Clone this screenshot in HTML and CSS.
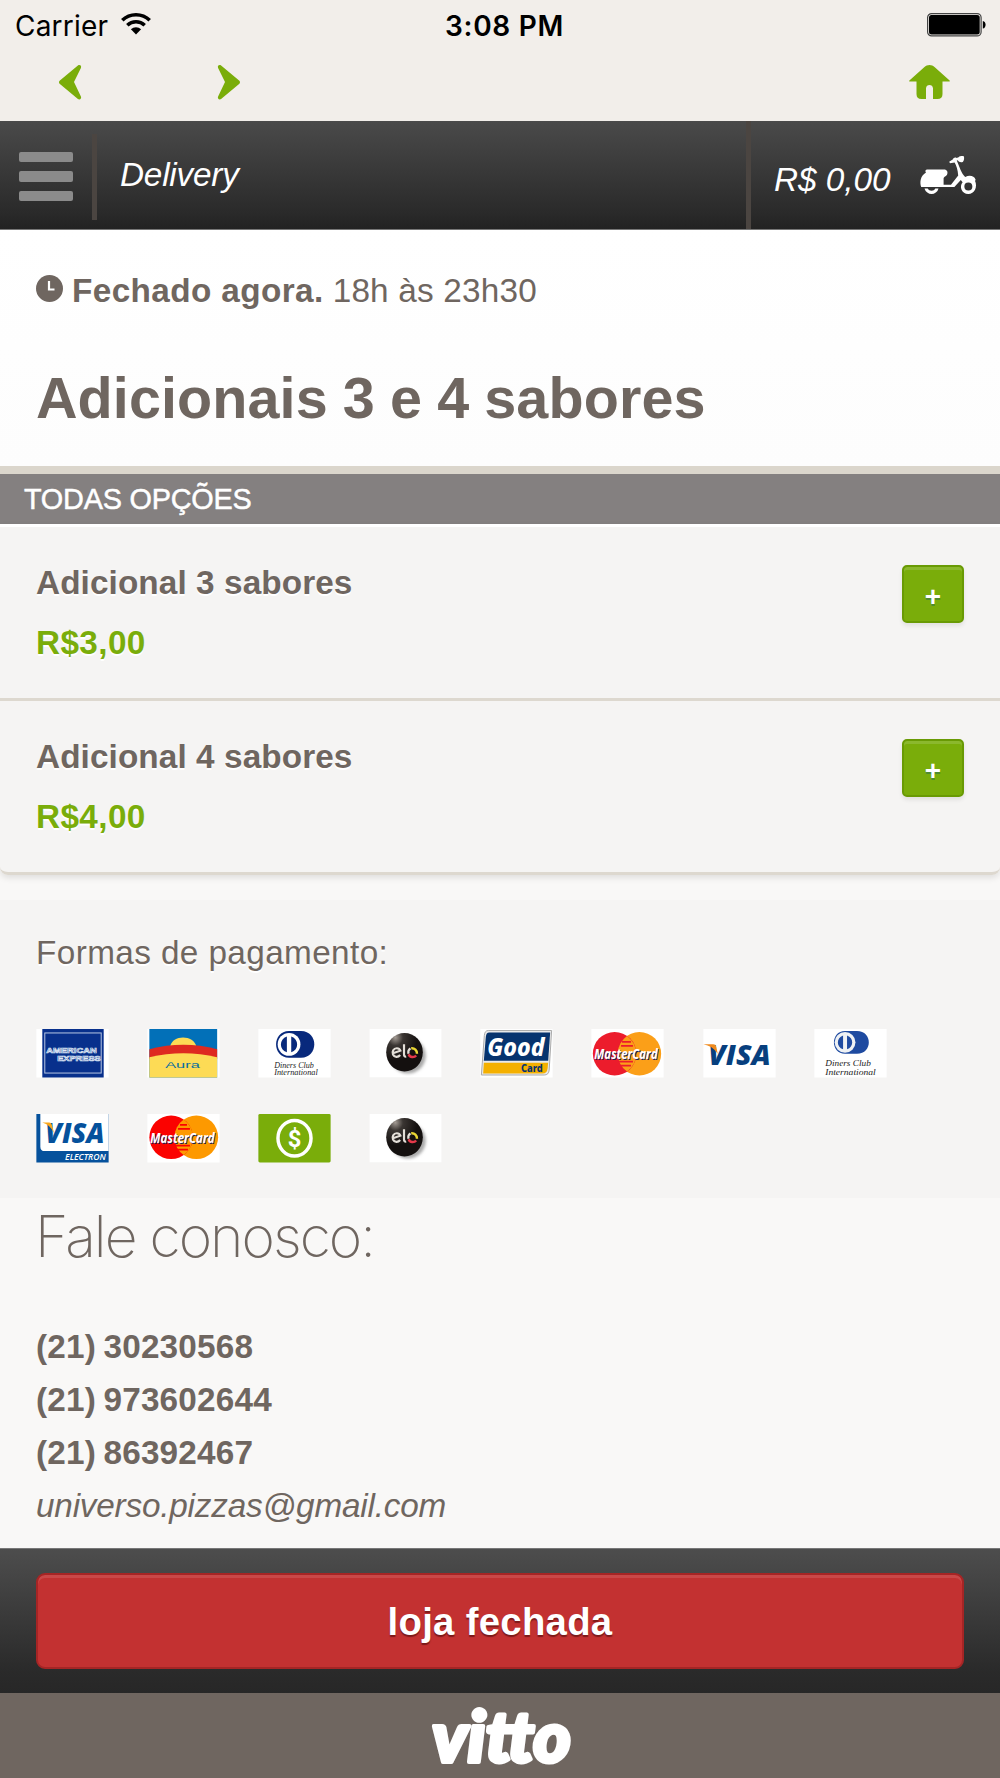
FILE: index.html
```html
<!DOCTYPE html>
<html lang="pt-BR">
<head>
  <meta charset="UTF-8" />
  <meta name="viewport" content="width=device-width, initial-scale=1" />
  <title>Delivery - Adicionais 3 e 4 sabores</title>
  <link rel="stylesheet" href="styles.css">
</head>
<body>
  <!-- Shared logos -->
  <svg class="defs" width="0" height="0">
    <defs>
      <radialGradient id="eloShade" cx="0.25" cy="0.12" r="0.6">
        <stop offset="0" stop-color="#a39b94" />
        <stop offset="0.35" stop-color="#3a3532" />
        <stop offset="1" stop-color="#14100f" />
      </radialGradient>
      <filter id="eloBlur" x="-30%" y="-30%" width="160%" height="160%">
        <feGaussianBlur stdDeviation="1.5" />
      </filter>
      <symbol id="elo" viewBox="0 0 73 49">
        <rect width="73" height="49" fill="#fff" />
        <ellipse cx="39" cy="27" rx="18" ry="18" fill="#aaa" filter="url(#eloBlur)" />
        <ellipse cx="35.5" cy="23.500" rx="18.500" ry="19.500" fill="url(#eloShade)" />
        <path d="M23.800 24.500l7.500-2.600c-1.200-3.200-5.600-3.200-7.200-.4-1.600 2.800-.1 6.500 3.200 6.600 1.800.1 2.800-.6 3.800-1.800M35 15.500v10.300c0 1.500.8 2.400 2.200 2" fill="none" stroke="#e4dfd8" stroke-width="2.200" />
        <path d="M42.300 19.400a5.200 5.200 0 0 1 5.800 5.600" fill="none" stroke="#e9d634" stroke-width="2.500" />
        <path d="M41.500 19.600a5 5 0 0 0-2 5.400" fill="none" stroke="#e4dfd8" stroke-width="2.200" />
        <path d="M39.700 25.500c1.200 3.500 5.600 3.700 7.500 1.200" fill="none" stroke="#e5394a" stroke-width="2.500" />
      </symbol>
    </defs>
  </svg>

  <div class="topbar">
    <div class="status">
      <div class="carrier">
        <span>Carrier</span>
        <svg width="30" height="22" viewBox="0 0 30 22">
          <path d="M1.300 7.300a19.500 19.500 0 0 1 27.400 0" fill="none" stroke="#000" stroke-width="3.600" />
          <path d="M6.300 12.300a12.600 12.600 0 0 1 17.400 0" fill="none" stroke="#000" stroke-width="3.500" />
          <path d="M9.900 16.200a7.400 7.400 0 0 1 10.200 0L15 21.500z" />
        </svg>
      </div>
      <div class="clock">3:08 PM</div>
      <svg class="battery" width="59" height="24" viewBox="0 0 59 24">
        <rect x="0.600" y="0.600" width="53.500" height="22.300" rx="4" fill="#f2eeea" stroke="#444" stroke-width="1.200" />
        <rect x="2" y="2" width="50.700" height="19.500" rx="2.500" />
        <path d="M55.800 8c3.700.4 3.700 7.200 0 7.600z" />
      </svg>
    </div>
    <div class="nav">
      <svg width="23" height="35" viewBox="0 0 23 35">
        <path d="M18.900.6c1.800-1.400 4 .3 3 2.300L15 17l6.900 14.500c1 2-1.200 3.900-3 2.500L.9 19c-1.200-1-1.200-2.600 0-3.600z" />
      </svg>
      <svg width="23" height="35" viewBox="0 0 23 35">
        <path d="M4.100.6C2.300-.8.100.9 1.100 2.900L8 17 1.100 31.500c-1 2 1.200 3.900 3 2.500l18-15c1.200-1 1.200-2.600 0-3.600z" />
      </svg>
      <svg class="home" width="41" height="34" viewBox="0 0 41 34">
        <path d="M.4 15.500L15.200 2.200c3.200-2.900 7.400-2.900 10.600 0L40.600 15.500c.4.500.2 1-.4 1H33.500V29c0 3.300-1.600 5-5 5H24V23.500c0-4.600-7-4.600-7 0V34h-4.500c-3.400 0-5-1.700-5-5V16.500H.8c-.6 0-.8-.5-.4-1z" />
      </svg>
    </div>
  </div>

  <header class="header">
    <div class="menu">
      <span></span>
      <span></span>
      <span></span>
    </div>
    <div class="page-name">Delivery</div>
    <div class="cart">
      <span>R$ 0,00</span>
      <svg width="56" height="38" viewBox="0 0 56 38">
        <path d="M6 16.500c-1.300-1.300-.4-3 1.200-3H24c3 0 4.300 2.600 3 5.200-.8 1.700-3.400 1.900-3.400 4v6H31l7.200-9.200c-.4-5.700-1.800-9.700-3.600-13L30 7.200l-.8-1.500L33 3.300c.3-1.700 2.200-2.500 3.600-1.400l2-.6c1.200-1.200 3-1.300 5.200-1.100.7 2.200.3 4.200-1 5.700-2.200.7-4 .1-5.200-1.600l-.8.3 3.800 9.300c1.300 3 2.700 5.200 4.600 7.100 4.600-2.300 9-.9 10.300 2.400.3.800 0 1.300-.6 1.100C58 31 54.400 38 48.300 38c-6.500 0-9.400-7.200-5.700-11.700l-1.800-2.200L34.400 31H1.200C-.4 26.500.3 19.800 6 16.500zM48.300 26.500a4 4 0 1 0 .1 8 4 4 0 0 0-.1-8z" fill-rule="evenodd" />
        <path d="M4.500 32.500h3.200c1.600 3 6.200 3 7.600 0h3.200c-1.900 7.300-11.900 7.300-14 0z" />
      </svg>
    </div>
  </header>

  <div class="hero">
    <p class="hours">
      <svg width="27" height="27" viewBox="0 0 27 27">
        <circle cx="13.500" cy="13.500" r="13.500" fill="#6f6660" />
        <path d="M13 6v8.500h5.500" fill="none" stroke="#fff" stroke-width="2.200" />
      </svg>
      <strong>Fechado agora.</strong>
      <span>18h às 23h30</span>
    </p>
    <h1>Adicionais 3 e 4 sabores</h1>
  </div>

  <h2 class="section-title">TODAS OPÇÕES</h2>

  <ul class="options">
    <li class="option">
      <div>
        <h3>Adicional 3 sabores</h3>
        <p class="price">R$3,00</p>
      </div>
      <button class="add">+</button>
    </li>
    <li class="option">
      <div>
        <h3>Adicional 4 sabores</h3>
        <p class="price">R$4,00</p>
      </div>
      <button class="add">+</button>
    </li>
  </ul>

  <div class="payment">
    <p>Formas de pagamento:</p>
    <div class="cards">
      <!-- American Express -->
      <svg viewBox="0 0 73 49">
        <rect width="73" height="49" fill="#fff" />
        <rect x="6" width="62" height="49" fill="#08308c" />
        <rect x="8.500" y="4" width="57" height="40.500" fill="none" stroke="#b9c8e4" />
        <g class="amex">
          <text x="10" y="24" textLength="51" lengthAdjust="spacingAndGlyphs">AMERICAN</text>
          <text x="21" y="32" textLength="44" lengthAdjust="spacingAndGlyphs">EXPRESS</text>
        </g>
      </svg>
      <!-- Aura -->
      <svg viewBox="0 0 73 49">
        <rect width="73" height="49" fill="#fff" />
        <rect x="2" width="68.500" height="49" fill="#0270b8" />
        <path d="M23 18c2-12.500 24-12.500 26.500 0z" fill="#fddb55" />
        <path d="M2 20.500q34.500-9 68.500 0V30H2z" fill="#de2a20" />
        <path d="M2 28.500q34.500-8 68.500 0V49H2z" fill="#fddb55" />
        <text class="aura" x="18" y="39.500" textLength="35" lengthAdjust="spacingAndGlyphs">Aura</text>
      </svg>
      <!-- Diners Club -->
      <svg viewBox="0 0 73 49">
        <rect width="73" height="49" fill="#fff" />
        <path d="M31 2h12c18 0 18 27 0 27H31c-17.500 0-17.500-27 0-27z" fill="#08297c" />
        <circle cx="31" cy="15.500" r="11.500" fill="#fff" />
        <path d="M28.800 7.500v16c-8-2.500-8-13.500 0-16zM33.200 7.500v16c8-2.500 8-13.500 0-16z" fill="#08297c" />
        <g class="diners">
          <text x="16" y="39" textLength="40" lengthAdjust="spacingAndGlyphs">Diners Club</text>
          <text x="16" y="46.500" textLength="44" lengthAdjust="spacingAndGlyphs">International</text>
        </g>
      </svg>
      <svg viewBox="0 0 73 49"><use href="#elo" /></svg>
      <!-- Good Card -->
      <svg viewBox="0 0 73 49">
        <rect width="73" height="49" fill="#fff" />
        <path d="M8 1.500h64l-2.500 40q-.4 5-5 5H1l3-40q.4-5 4-5z" fill="#e9e9e9" stroke="#aaa" />
        <path d="M9 3.500h61.500L68.500 32h-65l2-24q.4-4.500 3.500-4.500z" fill="#06336e" />
        <path d="M3.500 34h65l-.6 6q-.5 5-5 5H2.800z" fill="#f4b000" />
        <text class="good" x="7" y="27.500" textLength="58" lengthAdjust="spacingAndGlyphs">Good</text>
        <text class="good-card" x="41" y="43.500" textLength="22" lengthAdjust="spacingAndGlyphs">Card</text>
      </svg>
      <!-- MasterCard -->
      <svg viewBox="0 0 73 49">
        <rect width="73" height="49" fill="#fff" />
        <circle cx="48.500" cy="25" r="22" fill="#fb9f18" />
        <circle cx="23.500" cy="25" r="22" fill="#ec1c2c" />
        <path d="M36 7a22 22 0 0 1 0 36 22 22 0 0 1 0-36z" fill="#fb9f18" />
        <path d="M31 13h9M30 17h12M28 33h14M30 37h10" stroke="#ec1c2c" stroke-width="1.800" />
        <text class="master" x="3" y="30" textLength="64" lengthAdjust="spacingAndGlyphs">MasterCard</text>
      </svg>
      <!-- Visa -->
      <svg viewBox="0 0 73 49">
        <rect width="73" height="49" fill="#fff" />
        <text class="visa" x="5" y="36.500" textLength="63" lengthAdjust="spacingAndGlyphs">VISA</text>
        <path d="M0 15.500h10q2.500 0 3 2.500l1.500 7Q9 17 0 15.500z" fill="#f08a1d" />
      </svg>
      <!-- Diners Club, debit -->
      <svg viewBox="0 0 73 49">
        <rect width="73" height="49" fill="#fff" />
        <path d="M31 2h12c16 0 16 23 0 23H31C16 25 16 2 31 2z" fill="#1e4aa0" />
        <circle cx="31" cy="13.500" r="10.500" fill="#eef1f4" />
        <path d="M29 6.500v14c-7-2.500-7-11.500 0-14zM33 6.500v14c7-2.500 7-11.500 0-14z" fill="#1e4aa0" />
        <g class="diners">
          <text x="11" y="37" textLength="46" lengthAdjust="spacingAndGlyphs">Diners Club</text>
          <text x="11" y="46" textLength="51" lengthAdjust="spacingAndGlyphs">International</text>
        </g>
      </svg>
      <!-- Visa Electron -->
      <svg viewBox="0 0 73 49">
        <rect width="73" height="49" fill="#05519c" />
        <path d="M4 0h69v37.500H8.500Q4 37.500 4 33z" fill="#fff" />
        <text class="visa electron" x="9" y="29.500" textLength="60" lengthAdjust="spacingAndGlyphs">VISA</text>
        <path d="M6 8.500h7q2 0 2.500 2l2.500 9Q14 10.500 6 8.500z" fill="#f9a61a" />
        <text class="electron-name" x="29" y="46" textLength="41" lengthAdjust="spacingAndGlyphs">ELECTRON</text>
      </svg>
      <!-- MasterCard -->
      <svg viewBox="0 0 73 49">
        <rect width="73" height="49" fill="#fff" />
        <circle cx="49.500" cy="23.500" r="22" fill="#fd9900" />
        <circle cx="24" cy="23.500" r="22" fill="#fb0200" />
        <path d="M36.700 5.500a22 22 0 0 1 0 36 22 22 0 0 1 0-36z" fill="#fd9900" />
        <path d="M33 11h7M31 15h12M29 32h14M31 36h10" stroke="#fb0200" stroke-width="1.800" />
        <text class="master" x="3" y="29" textLength="65" lengthAdjust="spacingAndGlyphs">MasterCard</text>
      </svg>
      <!-- Cash -->
      <svg viewBox="0 0 73 49">
        <rect width="73" height="49" rx="1.500" fill="#7aad0a" />
        <ellipse cx="36.500" cy="24.500" rx="16.700" ry="18" fill="none" stroke="#fff" stroke-width="3.500" />
        <text class="cash" x="36.500" y="33">$</text>
      </svg>
      <svg viewBox="0 0 73 49"><use href="#elo" /></svg>
    </div>
  </div>

  <div class="contact">
    <h2>Fale conosco:</h2>
    <ul>
      <li>(21) 30230568</li>
      <li>(21) 973602644</li>
      <li>(21) 86392467</li>
      <li class="email">universo.pizzas@gmail.com</li>
    </ul>
  </div>

  <div class="bottom-bar">
    <button class="closed">loja fechada</button>
  </div>
  <footer class="footer">
    <svg width="150" height="66" viewBox="0 0 150 66">
      <text class="vitto" x="7" y="60" textLength="139" lengthAdjust="spacingAndGlyphs">vitto</text>
    </svg>
  </footer>
</body>
</html>
```

FILE: styles.css
```css
* {
  box-sizing: border-box;
}
body {
  margin: 0;
  width: 1000px;
  background-color: #f9f8f7;
  color: #6f6660;
  font-family: "Liberation Sans", Arial, sans-serif;
  font-size: 33.3px;
  line-height: 40px;
}
h1, h2, h3, p, ul {
  margin: 0;
  padding: 0;
}
ul {
  list-style: none;
}
svg {
  display: block;
  flex: none;
  overflow: visible;
}
.defs {
  position: absolute;
}

/* Status bar and browser buttons */
.topbar {
  height: 121px;
  background-color: #f2eeea;
}
.status {
  display: grid;
  grid-template-columns: 1fr auto 1fr;
  align-items: center;
  height: 50px;
  padding: 0 14px 0 15px;
  color: #000;
  font-family: Inter, sans-serif;
  font-size: 28px;
}
.carrier {
  display: flex;
  align-items: center;
  gap: 13px;
  padding-top: 1px;
  letter-spacing: 0.2px;
}
.carrier svg {
  margin-top: -3px;
}
.clock {
  padding: 1px 0 0 8px;
  font-weight: 600;
  letter-spacing: 0.7px;
}
.battery {
  justify-self: end;
}
.nav {
  display: flex;
  gap: 135px;
  padding: 15px 50px 0 59px;
  fill: #7aad0a;
}
.home {
  margin-left: auto;
}

/* Header */
.header {
  display: flex;
  height: 109px;
  background: linear-gradient(#4a4a4a, #2a2a2a 85%, #222);
  border-bottom: 1px solid #777;
  color: #fff;
  font-style: italic;
}
.menu {
  display: flex;
  flex-direction: column;
  gap: 9px;
  width: 97px;
  height: 86px;
  margin-top: 13px;
  padding: 18px 19px;
  border-right: 5px solid #4b4541;
}
.menu span {
  width: 54px;
  height: 10.300px;
  border-radius: 2px;
  background-color: #8b8b8b;
}
.page-name {
  flex: 1;
  padding: 34px 0 0 23px;
  letter-spacing: -0.2px;
}
.cart {
  display: flex;
  width: 254px;
  padding: 35px 0 0 23px;
  border-left: 5px solid #4b4541;
  fill: #fff;
}
.cart span {
  width: 146px;
  padding-top: 4px;
}

/* Store status and title */
.hero {
  height: 236px;
  padding: 41px 36px 0;
  background: linear-gradient(#fff, #fdfdfd);
}
.hours {
  display: flex;
}
.hours svg {
  margin: 4px 9px 0 0;
}
.hours strong {
  margin-right: 9px;
  letter-spacing: 0.4px;
}
.hours span {
  letter-spacing: 0.2px;
}
.hero h1 {
  margin-top: 52px;
  font-size: 57.500px;
  line-height: 70px;
  letter-spacing: 0.1px;
  word-spacing: -1px;
}

.section-title {
  height: 58px;
  padding: 0 24px;
  border-top: 8px solid #dbd6cc;
  background-color: #848080;
  color: #fff;
  font-size: 28.800px;
  font-weight: normal;
  line-height: 50px;
  letter-spacing: -0.2px;
  -webkit-text-stroke: 0.5px #fff;
}

/* Options */
.options {
  border-top: 3px solid #fff;
  border-radius: 0 0 8px 8px;
  box-shadow: 0 3px 6px rgba(0, 0, 0, 0.1);
  text-shadow: 0 2px 0 #fff;
}
.option {
  display: flex;
  justify-content: space-between;
  height: 174px;
  padding: 35px 36px 0;
  border-bottom: 3px solid #ddd8cf;
  background-color: #f5f4f3;
}
.option:last-child {
  border-radius: 0 0 8px 8px;
}
.option h3 {
  padding-top: 1px;
  font-size: inherit;
  letter-spacing: 0.1px;
}
.price {
  margin-top: 20px;
  color: #7aad0a;
  font-weight: bold;
  letter-spacing: 0.4px;
}
.add {
  width: 62px;
  height: 58px;
  margin-top: 3px;
  padding: 5px 0 0;
  border: 2px solid #699a04;
  border-radius: 5px;
  background-color: #7aad0a;
  box-shadow: inset 0 3px 0 #8bb82d, 0 3px 4px rgba(0, 0, 0, 0.08);
  color: #fff;
  font-family: inherit;
  font-size: 28px;
  font-weight: bold;
  text-shadow: 0 2px 0 #4f8b30;
}

/* Payment methods */
.payment {
  height: 298px;
  margin-top: 25px;
  padding: 33px 36px 0;
  background-color: #f5f4f3;
  text-shadow: 0 2px 0 #fff;
}
.payment p {
  letter-spacing: 0.4px;
}
.cards {
  display: grid;
  grid-template-columns: repeat(8, 73px);
  gap: 36px 38.100px;
  margin-top: 56px;
  text-shadow: none;
}
.cards svg {
  width: 73px;
  height: 48.500px;
}
.amex {
  fill: #08308c;
  stroke: #dfe8f5;
  stroke-width: 0.7px;
  font-size: 8px;
  font-weight: bold;
}
.aura {
  fill: #0a6f9e;
  font-size: 9px;
}
.diners {
  fill: #222;
  font-family: "Liberation Serif", serif;
  font-size: 9px;
  font-style: italic;
}
.good, .good-card {
  fill: #fff;
  font-family: "Noto Sans", sans-serif;
  font-size: 25px;
  font-weight: 800;
}
.good {
  font-style: italic;
}
.good-card {
  fill: #06336e;
  font-size: 11px;
}
.master {
  fill: #fff;
  font-family: "Open Sans", sans-serif;
  font-size: 15px;
  font-style: italic;
  font-weight: 700;
  text-shadow: 1px 1px 0 #1b2254;
}
.visa {
  fill: #073f7e;
  font-family: "Open Sans", sans-serif;
  font-size: 29px;
  font-style: italic;
  font-weight: 800;
}
.electron {
  fill: #05519c;
}
.electron-name {
  fill: #fff;
  font-family: "Open Sans", sans-serif;
  font-size: 9px;
  font-style: italic;
  font-weight: 600;
}
.cash {
  fill: #fff;
  font-family: Roboto, sans-serif;
  font-size: 24px;
  font-weight: 700;
  text-anchor: middle;
}

/* Contact */
.contact {
  height: 350px;
  padding: 4px 35px 0;
}
.contact h2 {
  font-family: Inter, sans-serif;
  font-size: 57px;
  font-weight: 200;
  line-height: 70px;
  letter-spacing: -2px;
}
.contact ul {
  margin-top: 48px;
  padding-left: 1px;
  font-weight: bold;
  line-height: 53.100px;
  letter-spacing: 0.2px;
  word-spacing: -2px;
}
.contact .email {
  font-style: italic;
  font-weight: normal;
  letter-spacing: -0.2px;
}

/* Bottom */
.bottom-bar {
  height: 145px;
  padding: 24px 36px 0;
  border-top: 1px solid #777;
  background: linear-gradient(#4d4d4d, #2a2a2a 85%, #272727);
}
.closed {
  width: 100%;
  height: 96px;
  padding: 2px 0 0;
  border: 2px solid #a52525;
  border-radius: 9px;
  background-color: #c33131;
  box-shadow: inset 0 3px 0 #c94848;
  color: #fff;
  font-family: inherit;
  font-size: 38.300px;
  font-weight: bold;
  letter-spacing: 0.3px;
  text-shadow: 0 2px 1px #7c1a1a;
}
.footer {
  display: flex;
  justify-content: center;
  height: 85px;
  padding-top: 9px;
  background-color: #6f6660;
}
.vitto {
  fill: #fff;
  stroke: #fff;
  stroke-width: 4px;
  stroke-linejoin: round;
  font-family: Lato, sans-serif;
  font-size: 70px;
  font-style: italic;
  font-weight: 900;
}
```
